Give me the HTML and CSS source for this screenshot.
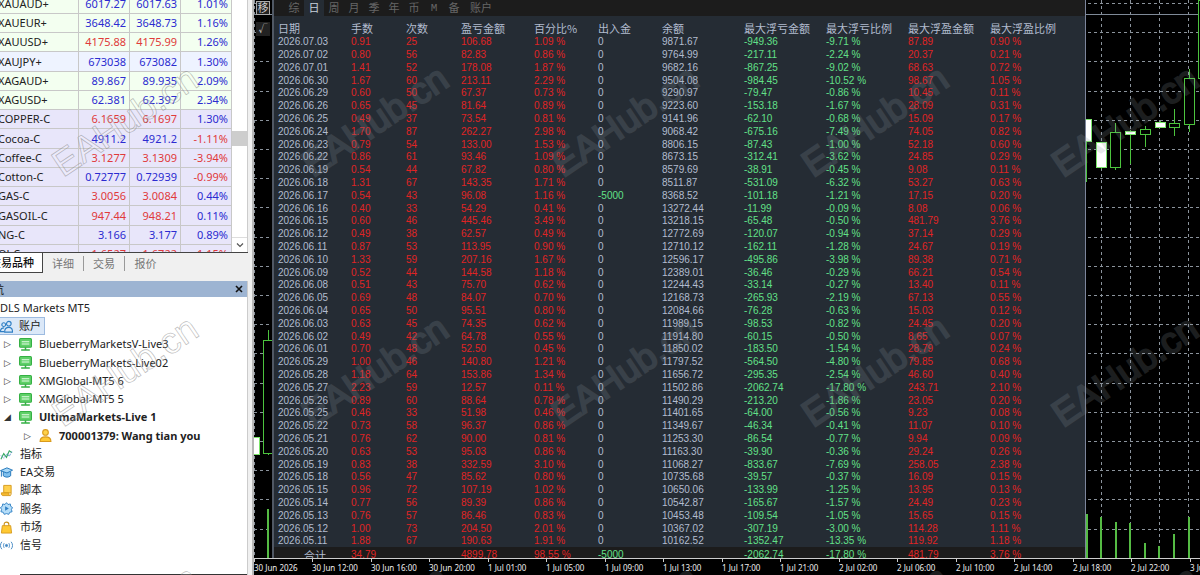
FILE: index.html
```html
<!DOCTYPE html>
<html lang="zh-CN">
	<head>
		<meta charset="utf-8">
		<meta name="viewport" content="width=device-width, initial-scale=1.0">
		<title>MT5</title>
		<link rel="stylesheet" href="styles.css">
	</head>
	<body>
		<svg class="symbols" width="0" height="0">
			<symbol id="server" viewBox="0 0 12 12">
				<rect x="0.5" y="0.5" width="11" height="8" rx="1" fill="#5fd068" stroke="#35b044"/>
				<path d="M2.5 3.5h7M2.5 5.5h7" stroke="#e9fbe9"/>
				<path d="M6 8.5v2M2 11h8" stroke="#35b044" stroke-width="1.4"/>
			</symbol>
			<symbol id="user" viewBox="0 0 12 12">
				<circle cx="6" cy="3.2" r="2.6" fill="#ffd24a" stroke="#d99a1c"/>
				<path d="M1 11.5c0-3 1.500-4.200 5-4.200s5 1.200 5 4.200z" fill="#ffc933" stroke="#d99a1c"/>
			</symbol>
		</svg>
		<div class="terminal">
			<aside class="sidebar">
				<section class="watch">
					<div class="quotes">
						<table id="quotes">
							<colgroup><col><col class="price"><col class="price"><col class="price"></colgroup>
						</table>
					</div>
					<div class="scrollbar">
						<div class="thumb"></div>
						<button class="down" aria-label="向下"><svg viewBox="0 0 8 8"><path d="M1 2.500l3 3 3-3" fill="none" stroke="#555" stroke-width="1.200"/></svg></button>
					</div>
				</section>
				<nav class="tabs">
					<button class="tab active"><span>交易品种</span></button>
					<button class="tab">详细</button>
					<button class="tab">交易</button>
					<button class="tab">报价</button>
				</nav>
				<section class="navigator">
					<header><span class="caption">导航</span><button class="close" aria-label="关闭"><svg viewBox="0 0 8 8"><path d="M1 1l6 6M7 1L1 7" stroke="#111" stroke-width="1.600"/></svg></button></header>
					<ul class="tree">
						<li class="root">DLS Markets MT5</li>
						<li><span class="selected"><svg viewBox="0 0 14 14" fill="none" stroke="#2f7fc4" stroke-width="1.200"><circle cx="9.500" cy="4" r="2.500"/><path d="M5 13c0-3.500 1.500-5 4.500-5s4 1.500 4 5z"/><circle cx="4" cy="5" r="2"/><path d="M4.500 12.500h-4c0-3 1-4 4-4"/></svg>账户</span></li>
						<li class="server"><i class="arrow">▷</i><svg><use href="#server"/></svg>BlueberryMarketsV-Live3</li>
						<li class="server"><i class="arrow">▷</i><svg><use href="#server"/></svg>BlueberryMarkets-Live02</li>
						<li class="server"><i class="arrow">▷</i><svg><use href="#server"/></svg>XMGlobal-MT5 6</li>
						<li class="server"><i class="arrow">▷</i><svg><use href="#server"/></svg>XMGlobal-MT5 5</li>
						<li class="server open"><i class="arrow">◢</i><svg><use href="#server"/></svg>UltimaMarkets-Live 1</li>
						<li class="server login"><i class="arrow">▷</i><svg><use href="#user"/></svg>700001379: Wang tian you</li>
						<li><svg viewBox="0 0 14 14" fill="none"><path d="M1 12l3-6 3 4 3-7 3 2" stroke="#35a860" stroke-width="1.200"/><path d="M1 8l3 3 4-5 2 3 3-6" stroke="#5c93c9" stroke-dasharray="2 1"/></svg>指标</li>
						<li><svg viewBox="0 0 14 14"><path d="M3.500 6v4.500c2 2 6 2 8 0V6" fill="#7fc0ee" stroke="#1f74b8"/><path d="M0.500 5L7.500 2l6 2.500-6 3z" fill="#a9d8f7" stroke="#1f74b8"/><path d="M1.500 5.500v6" stroke="#1f74b8"/></svg>EA交易</li>
						<li><svg viewBox="0 0 14 14"><path d="M4 1.500h8v8H4z" fill="#ffd04d" stroke="#d69a1d"/><path d="M1.500 9.500h8c0 2 .5 3 1.500 3H3c-1 0-1.500-1-1.500-3zM12 9.500c0 2-.5 3-1 3" fill="#f5b92e" stroke="#d69a1d"/></svg>脚本</li>
						<li><svg viewBox="0 0 14 14"><path d="M7 .7l1.600 2 2.500-.6.4 2.500 2 1.400-1.200 2 .7 2.500-2.500.6-1 2.200L7 12.500l-2.500.8-1-2.200-2.500-.6.7-2.500-1.200-2 2-1.400.4-2.500 2.500.6z" fill="#b5ddf8" stroke="#2f7fc4"/><path d="M5.500 4.500v5l4-2.500z" fill="#2f7fc4"/></svg>服务</li>
						<li><svg viewBox="0 0 14 14"><path d="M4.500 6V3.500c0-3 5-3 5 0V6" fill="none" stroke="#c98f16" stroke-width="1.200"/><path d="M2.500 5h9l1 8h-11z" fill="#ffc933" stroke="#d69a1d"/></svg>市场</li>
						<li><svg viewBox="0 0 14 14" fill="none" stroke="#3f86c2"><circle cx="7" cy="7" r="1.200" fill="#3f86c2"/><path d="M4.500 4.500c-1 1.500-1 3.500 0 5M9.500 4.500c1 1.500 1 3.500 0 5M2 3c-2 2.500-2 5.500 0 8M12 3c2 2.500 2 5.500 0 8"/></svg>信号</li>
					</ul>
					<hr class="rule">
				</section>
			</aside>
			<main class="chart">
				<div class="plot">
					<svg class="candles" id="candles"></svg>
					<div class="tools">
						<button class="move">移</button>
						<button class="check">√</button>
					</div>
					<section class="report">
						<nav class="periods">
							<button>综</button><button class="active">日</button><button>周</button><button>月</button><button>季</button><button>年</button><button>币</button><button class="mono">M</button><button>备</button><button class="wide">账户</button>
						</nav>
						<table id="report">
							<colgroup><col class="c73"><col class="c55"><col class="c55"><col class="c73"><col class="c64"><col class="c64"><col class="c82"><col class="c82"><col class="c82"><col class="c82"><col></colgroup>
							<thead><tr><th>日期</th><th>手数</th><th>次数</th><th>盈亏金额</th><th>百分比%</th><th>出入金</th><th>余额</th><th>最大浮亏金额</th><th>最大浮亏比例</th><th>最大浮盈金额</th><th>最大浮盈比例</th></tr></thead>
							<tbody></tbody>
							<tfoot><tr><td class="total">合计</td><td class="up">34.79</td><td></td><td class="up">4899.78</td><td class="up">98.55 %</td><td class="down">-5000</td><td></td><td class="down">-2062.74</td><td class="down">-17.80 %</td><td class="up">481.79</td><td class="up">3.76 %</td></tr></tfoot>
						</table>
					</section>
				</div>
				<ol class="axis">
					<li>30 Jun 2026</li><li>30 Jun 12:00</li><li>30 Jun 16:00</li><li>30 Jun 20:00</li><li>1 Jul 01:00</li><li>1 Jul 05:00</li><li>1 Jul 09:00</li><li>1 Jul 13:00</li><li>1 Jul 17:00</li><li>1 Jul 21:00</li><li>2 Jul 02:00</li><li>2 Jul 06:00</li><li>2 Jul 10:00</li><li>2 Jul 14:00</li><li>2 Jul 18:00</li><li>2 Jul 22:00</li><li>3 Jul 03:00</li>
				</ol>
			</main>
		</div>
		<svg class="watermark" id="watermark"></svg>
		<script>
			// symbol, bid, ask, change, direction of the prices, background
			const quotes = `XAUAUD+|6017.27|6017.63|1.01%|b|g
XAUEUR+|3648.42|3648.73|1.16%|b|g
XAUUSD+|4175.88|4175.99|1.26%|r|g
XAUJPY+|673038|673082|1.30%|b|l
XAGAUD+|89.867|89.935|2.09%|b|g
XAGUSD+|62.381|62.397|2.34%|b|g
COPPER-C|6.1659|6.1697|1.30%|r|p
Cocoa-C|4911.2|4921.2|-1.11%|b|p
Coffee-C|3.1277|3.1309|-3.94%|r|p
Cotton-C|0.72777|0.72939|-0.99%|b|p
GAS-C|3.0056|3.0084|0.44%|r|p
GASOIL-C|947.44|948.21|0.11%|r|p
NG-C|3.166|3.177|0.89%|b|p
OJ-C|1.6527|1.6722|-1.15%|r|p`;

			// date, lots, trades, profit, %, deposit, balance, drawdown, %, float profit, %
			const days = `2026.07.03|0.91|25|106.68|1.09|0|9871.67|-949.36|-9.71|87.89|0.90
2026.07.02|0.80|56|82.83|0.86|0|9764.99|-217.11|-2.24|20.37|0.21
2026.07.01|1.41|52|178.08|1.87|0|9682.16|-867.25|-9.02|68.63|0.72
2026.06.30|1.67|60|213.11|2.29|0|9504.08|-984.45|-10.52|98.67|1.05
2026.06.29|0.60|50|67.37|0.73|0|9290.97|-79.47|-0.86|10.45|0.11
2026.06.26|0.65|45|81.64|0.89|0|9223.60|-153.18|-1.67|28.09|0.31
2026.06.25|0.49|37|73.54|0.81|0|9141.96|-62.10|-0.68|15.09|0.17
2026.06.24|1.70|87|262.27|2.98|0|9068.42|-675.16|-7.49|74.05|0.82
2026.06.23|0.79|54|133.00|1.53|0|8806.15|-87.43|-1.00|52.18|0.60
2026.06.22|0.86|61|93.46|1.09|0|8673.15|-312.41|-3.62|24.85|0.29
2026.06.19|0.54|44|67.82|0.80|0|8579.69|-38.91|-0.45|9.08|0.11
2026.06.18|1.31|67|143.35|1.71|0|8511.87|-531.09|-6.32|53.27|0.63
2026.06.17|0.54|43|96.08|1.16|-5000|8368.52|-101.18|-1.21|17.15|0.20
2026.06.16|0.40|33|54.29|0.41|0|13272.44|-11.99|-0.09|8.08|0.06
2026.06.15|0.60|46|445.46|3.49|0|13218.15|-65.48|-0.50|481.79|3.76
2026.06.12|0.49|38|62.57|0.49|0|12772.69|-120.07|-0.94|37.14|0.29
2026.06.11|0.87|53|113.95|0.90|0|12710.12|-162.11|-1.28|24.67|0.19
2026.06.10|1.33|59|207.16|1.67|0|12596.17|-495.86|-3.98|89.38|0.71
2026.06.09|0.52|44|144.58|1.18|0|12389.01|-36.46|-0.29|66.21|0.54
2026.06.08|0.51|43|75.70|0.62|0|12244.43|-33.14|-0.27|13.40|0.11
2026.06.05|0.69|48|84.07|0.70|0|12168.73|-265.93|-2.19|67.13|0.55
2026.06.04|0.65|50|95.51|0.80|0|12084.66|-76.28|-0.63|15.03|0.12
2026.06.03|0.63|45|74.35|0.62|0|11989.15|-98.53|-0.82|24.45|0.20
2026.06.02|0.49|42|64.78|0.55|0|11914.80|-60.15|-0.50|8.65|0.07
2026.06.01|0.70|48|52.50|0.45|0|11850.02|-183.50|-1.54|28.79|0.24
2026.05.29|1.00|46|140.80|1.21|0|11797.52|-564.50|-4.80|79.85|0.68
2026.05.28|1.18|64|153.86|1.34|0|11656.72|-295.35|-2.54|46.60|0.40
2026.05.27|2.23|59|12.57|0.11|0|11502.86|-2062.74|-17.80|243.71|2.10
2026.05.26|0.89|60|88.64|0.78|0|11490.29|-213.20|-1.86|23.05|0.20
2026.05.25|0.46|33|51.98|0.46|0|11401.65|-64.00|-0.56|9.23|0.08
2026.05.22|0.73|58|96.37|0.86|0|11349.67|-46.34|-0.41|11.07|0.10
2026.05.21|0.76|62|90.00|0.81|0|11253.30|-86.54|-0.77|9.94|0.09
2026.05.20|0.63|53|95.03|0.86|0|11163.30|-39.90|-0.36|29.24|0.26
2026.05.19|0.83|38|332.59|3.10|0|11068.27|-833.67|-7.69|258.05|2.38
2026.05.18|0.56|47|85.62|0.80|0|10735.68|-39.57|-0.37|16.09|0.15
2026.05.15|0.96|72|107.19|1.02|0|10650.06|-133.99|-1.25|13.95|0.13
2026.05.14|0.77|56|89.39|0.86|0|10542.87|-165.67|-1.57|24.49|0.23
2026.05.13|0.76|57|86.46|0.83|0|10453.48|-109.54|-1.05|15.65|0.15
2026.05.12|1.00|73|204.50|2.01|0|10367.02|-307.19|-3.00|114.28|1.11
2026.05.11|1.88|67|190.63|1.91|0|10162.52|-1352.47|-13.35|119.92|1.18`;

			let html = "";
			for (let line of quotes.split("\n")) {
				let [name, bid, ask, change, dir, bg] = line.split("|");
				html += `<tr class="${bg}"><td>${name}</td><td class=${dir}>${bid}</td><td class=${dir}>${ask}</td><td class=${change[0] == "-" ? "r" : "b"}>${change}</td></tr>`;
			}
			document.getElementById("quotes").insertAdjacentHTML("beforeend", `<tbody>${html}</tbody>`);

			html = "";
			for (let line of days.split("\n")) {
				html += "<tr>";
				line.split("|").forEach((value, i) => {
					let cls = value[0] == "-" ? "down" : i == 0 || i == 5 || i == 6 ? "" : "up";
					html += `<td class="${cls}">${value}${i == 4 || i == 8 || i == 10 ? " %" : ""}</td>`;
				});
				html += "</tr>";
			}
			document.querySelector("#report tbody").innerHTML = html;

			// x, high, low, body top, body bottom, filled
			const candles = [
				[0, 437, 455, 437, 455, 1], [14, 330, 455, 340, 454, 0],
				[832, 119, 182, 119, 142, 1], [847, 142, 169, 142, 168, 1], [861, 123, 170, 132, 168, 0],
				[876, 130, 164, 131, 135, 1], [891, 126, 147, 129, 135, 0], [906, 121, 128, 122, 128, 1],
				[920, 109, 136, 123, 128, 0], [935, 69, 132, 78, 125, 0], [949, 0, 79, 0, 79, 0]
			];
			const volumes = [[14, 509], [833, 514], [847, 517], [862, 522], [876, 523], [891, 543], [905, 546], [920, 534], [935, 517]];
			html = "";
			for (let i = 0; i < 19; i++)
				html += `<path class=grid d="M0 ${Math.round(3 + i * 29.2) + 0.5}H2000"/>`;
			for (let i = 0; i < 33; i++)
				html += `<path class=grid d="M${Math.round(i * 29.2) + 0.5} 0V558"/>`;
			html += `<path class=level d="M0 14.5H2000"/>`;
			for (let [x, y] of volumes)
				html += `<path class=volume d="M${x} ${y}V558"/>`;
			for (let [x, high, low, top, bottom, filled] of candles)
				html += `<path class=wick d="M${x + 0.5} ${high}V${low}"/><rect class="${filled ? "bear" : "bull"}" x=${x - 4.5} y=${top + 0.5} width=10 height=${bottom - top - 1} />`;
			document.getElementById("candles").innerHTML = html;

			html = "";
			for (let y = 178; y < 700; y += 250)
				for (let x = 63; x < 1200; x += 250)
					html += `<text class="${x < 250 ? "outline" : "solid"}" transform="translate(${x} ${y}) rotate(-34)">EAHub.cn</text>`;
			document.getElementById("watermark").innerHTML = html;
		</script>
	</body>
</html>
```
FILE: styles.css
```css
body {
	margin: 0;
	font-family: "Noto Sans", "Noto Sans CJK SC", sans-serif;
	font-size: 11px;
	color: #222;
	background-color: #f0f0f0;
	overflow: hidden;
}

button {
	font: inherit;
	color: inherit;
	padding: 0;
	border: none;
	background: none;
}

table {
	border-collapse: collapse;
	table-layout: fixed;
	width: 100%;
}

.symbols {
	position: absolute;
}

.terminal {
	display: flex;
	height: 100vh;
}

/* left side */

.sidebar {
	flex: 0 0 248px;
	display: flex;
	flex-direction: column;
	border-right: 4px solid #f0f0f0;
}

.watch {
	flex: 0 0 252px;
	display: flex;
	overflow: hidden;
	background-color: white;
	border-bottom: 1px solid #444;
}

.quotes {
	flex: 1;
	overflow: hidden;
}

#quotes {
	margin-top: -6px;
	font-size: 11px;
}

#quotes tr {
	height: 19px;
}

#quotes tr:nth-child(4n) {
	height: 20px;
}

#quotes td {
	padding: 0 3px 0 0;
	border-right: 1px solid #c8c8c8;
	border-bottom: 1px solid #c8c8c8;
	line-height: 15px;
	text-align: right;
}

#quotes td:first-child {
	text-align: left;
	text-indent: -2px;
}

.price {
	width: 51px;
}

.g {
	background-color: #f3fff0;
}

.l {
	background-color: #eef3ff;
}

.p {
	background-color: #e8e6fa;
}

.b {
	color: #2b2bd0;
}

.r {
	color: #e03a3a;
}

.scrollbar {
	width: 15px;
	display: flex;
	flex-direction: column;
	justify-content: space-between;
	border-right: 1px solid #ccc;
}

.thumb {
	height: 15px;
	margin-top: 131px;
	background-color: #cdcdcd;
}

.scrollbar .down {
	height: 15px;
	border-top: 1px solid #ddd;
	line-height: 0;
}

.scrollbar svg, .close svg {
	width: 8px;
	height: 8px;
}

.tabs {
	flex: 0 0 20px;
	display: flex;
	align-items: stretch;
}

.tab {
	width: 41px;
	color: #777;
	border-right: 1px solid #999;
	margin: 3px 0 2px;
	line-height: 13px;
}

.tab:last-child {
	border: none;
}

.tab.active {
	width: 43px;
	display: flex;
	justify-content: flex-end;
	align-items: center;
	margin: 0;
	padding-right: 8px;
	color: #111;
	font-weight: 500;
	background-color: white;
	border-right: 1px solid #444;
	border-bottom: 1px solid #444;
}

.tab.active span {
	white-space: nowrap;
}

.navigator {
	flex: 1;
	display: flex;
	flex-direction: column;
	margin-top: 8px;
	background-color: white;
	border-right: 1px solid #ccc;
}

.navigator header {
	display: flex;
	justify-content: space-between;
	align-items: center;
	height: 16px;
	margin-bottom: 2px;
	padding-right: 4px;
	background-color: #9db4d2;
	overflow: hidden;
}

.caption {
	margin-left: -18px;
}

.close {
	line-height: 0;
}

.tree {
	list-style: none;
	margin: 0;
	padding: 0;
}

.tree li {
	display: flex;
	align-items: center;
	height: 18px;
	line-height: 16px;
	white-space: nowrap;
}

.tree li:nth-child(4n) {
	height: 19px;
}

.tree svg {
	width: 13px;
	height: 13px;
	margin-right: 7px;
}

.tree .selected svg {
	margin-right: 6px;
}

.selected {
	display: flex;
	align-items: center;
	padding-right: 3px;
	background-color: #dbe8f8;
	border: 1px solid #9dbbe0;
	border-left: none;
}

.arrow {
	width: 15px;
	padding-left: 4px;
	font: 9px "DejaVu Sans", sans-serif;
	color: #333;
}

.tree .open, .tree .login {
	font-weight: bold;
}

.tree .login {
	padding-left: 20px;
}

.rule {
	width: 227px;
	height: 1px;
	margin: auto 0 0 20px;
	border: none;
	background-color: #333;
}

/* chart */

.chart {
	flex: 1;
	min-width: 0;
	display: flex;
	flex-direction: column;
	background-color: black;
	border-left: 2px solid #b8b8b8;
}

.plot {
	flex: 1;
	min-height: 0;
	display: flex;
	position: relative;
	overflow: hidden;
	padding-right: 114px;
}

.candles {
	position: absolute;
	width: 100%;
	height: 100%;
}

.grid {
	stroke: #8b939c;
	stroke-dasharray: 3 3;
}

.level {
	stroke: #7f8a98;
}

.volume {
	stroke: #55bb44;
	stroke-width: 2;
}

.wick {
	stroke: #4cc43e;
}

.bull {
	fill: black;
	stroke: #4cc43e;
}

.bear {
	fill: white;
	stroke: #7be56a;
}

.tools {
	position: relative;
	width: 18px;
	display: flex;
	flex-direction: column;
	align-items: center;
	gap: 7px;
	padding-top: 1px;
	box-sizing: border-box;
}

.tools button {
	width: 14px;
	height: 14px;
	line-height: 12px;
	color: #ccc;
	background-color: #222;
}

.tools .move {
	border: 1px solid #aaa;
}

.tools .check {
	font-size: 9px;
}

.report {
	position: relative;
	flex: 1;
	border-left: 2px solid #505864;
	border-right: 1px solid #7c859b;
	background-color: #252c34;
}

.periods {
	display: flex;
	height: 16px;
	padding-left: 10px;
	color: #666;
	background-color: #1c1c1c;
}

.periods button {
	width: 20px;
	line-height: 16px;
}

.periods .active {
	color: #c8d0dc;
	background-color: #252c34;
}

.periods .mono {
	font-family: "Liberation Mono", monospace;
}

.periods .wide {
	width: 34px;
}

#report {
	font: 10px "Liberation Sans", Arial, sans-serif;
	color: #b2bccf;
}

.c55 {
	width: 55px;
}

.c64 {
	width: 64px;
}

.c73 {
	width: 73px;
}

.c82 {
	width: 82px;
}

#report th, #report td {
	padding: 0 0 0 4px;
	line-height: 12px;
	text-align: left;
	white-space: nowrap;
}

#report thead tr {
	height: 19px;
}

#report th {
	padding-top: 4px;
	font: 11px "Noto Sans CJK SC", sans-serif;
	line-height: 14px;
}

#report tbody tr {
	height: 13px;
}

#report tbody tr:nth-child(5n) {
	height: 12px;
}

#report tfoot {
	background-color: #1c1c1c;
}

#report tfoot tr {
	height: 16px;
}

#report .total {
	padding-right: 21px;
	text-align: right;
	font: 11px "Noto Sans CJK SC", sans-serif;
	line-height: 12px;
}

#report .up {
	color: #e02424;
}

#report .down {
	color: #62e088;
}

.axis {
	flex: 0 0 16px;
	display: flex;
	margin: 0;
	padding: 0;
	list-style: none;
	overflow: hidden;
	border-top: 1px solid #ccc;
	color: #eee;
	font-size: 8px;
	line-height: 12px;
}

.axis li {
	flex: 0 0 58px;
	white-space: nowrap;
}

.axis li::before {
	content: "";
	display: block;
	width: 1px;
	height: 3px;
	background-color: #ccc;
}

.axis li:nth-child(even) {
	flex-basis: 59px;
}

/* tiled text over everything */

.watermark {
	position: absolute;
	top: 0;
	left: 0;
	width: 100%;
	height: 100%;
	pointer-events: none;
	font: 37px "Liberation Sans", Arial, sans-serif;
}

.outline {
	fill: rgba(255, 255, 255, 0.2);
	stroke: rgba(120, 120, 120, 0.5);
	stroke-width: 0.7;
}

.solid {
	fill: #8c949c;
	stroke: #8c949c;
	stroke-width: 2;
	opacity: 0.2;
}
```
